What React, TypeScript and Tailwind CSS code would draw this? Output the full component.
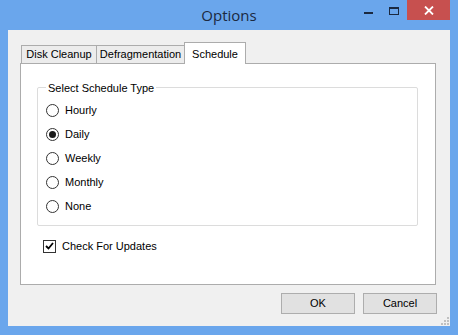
import React from 'react'

const ui = { fontFamily: '"Liberation Sans", Arial, sans-serif' }

function Radio({ label, checked }: { label: string; checked?: boolean }) {
  return (
    <div className="flex items-center h-[24px]">
      <span className="w-[13px] h-[13px] rounded-full border border-[#333] bg-white flex items-center justify-center">
        {checked && <span className="w-[7px] h-[7px] rounded-full bg-[#1a1a1a]" />}
      </span>
      <span className="ml-[6px] text-[11px] text-black">{label}</span>
    </div>
  )
}

export default function App() {
  const options = ['Hourly', 'Daily', 'Weekly', 'Monthly', 'None']
  return (
    <div className="w-[458px] h-[335px] bg-[#6aa6ec] flex flex-col" style={ui}>
      {/* Title bar */}
      <div className="h-[30px] flex items-start shrink-0 relative">
        <div className="flex-1 h-full flex items-center justify-center pl-[103px]">
          <span className="text-[15px] text-[#1b2940]" style={{ fontFamily: '"Open Sans", "Noto Sans", sans-serif' }}>
            Options
          </span>
        </div>
        <div className="flex items-start h-[21px] mr-[8px]">
          <div className="w-[26px] h-[21px] flex items-center justify-center">
            <span className="w-[9px] h-[2px] bg-[#1b2940] mt-[5px]" />
          </div>
          <div className="w-[26px] h-[21px] flex items-center justify-center">
            <span className="w-[10px] h-[8px] border border-[#1b2940] border-t-2" />
          </div>
          <div className="w-[43px] h-[20px] bg-[#c7504f] flex items-center justify-center">
            <svg width="10" height="9" viewBox="0 0 10 9">
              <path d="M1 0.5 L9 8.5 M9 0.5 L1 8.5" stroke="white" strokeWidth="1.8" />
            </svg>
          </div>
        </div>
      </div>

      {/* Client area */}
      <div className="mx-[8px] mb-[9px] flex-1 bg-[#f0f0f0] flex flex-col relative">
        <div className="pt-[12px] pl-[12px]">
          {/* Tabs */}
          <div className="flex items-end h-[21px] pl-[1px]">
            <div className="w-[76px] h-[18px] border border-b-0 border-[#acacac] bg-[#ececec] flex items-center justify-center text-[11px] text-black">
              Disk Cleanup
            </div>
            <div className="w-[89px] h-[18px] -ml-px border border-b-0 border-[#acacac] bg-[#ececec] flex items-center justify-center text-[11px] text-black">
              Defragmentation
            </div>
            <div className="w-[62px] h-[22px] -ml-px border border-b-0 border-[#acacac] bg-white flex items-start pt-[3px] justify-center text-[11px] text-black relative z-10 -mb-px">
              Schedule
            </div>
          </div>
          {/* Panel */}
          <div className="w-[416px] h-[222px] border border-[#acacac] bg-white pl-[16px] pt-[23px]">
            <div className="w-[381px] h-[139px] border border-[#dcdcdc] rounded-[2px] relative pt-[10px] pl-[8px]">
              <span className="absolute -top-[8px] left-[8px] bg-white px-[2px] text-[11px] text-black">
                Select Schedule Type
              </span>
              {options.map((o) => (
                <Radio key={o} label={o} checked={o === 'Daily'} />
              ))}
            </div>
            <div className="flex items-center mt-[12px] ml-[6px]">
              <span className="w-[13px] h-[13px] border border-[#333] bg-white flex items-center justify-center">
                <svg width="9" height="8" viewBox="0 0 9 8">
                  <path d="M1 4 L3.5 6.5 L8 1" stroke="black" strokeWidth="1.8" fill="none" />
                </svg>
              </span>
              <span className="ml-[6px] text-[11px] text-black">Check For Updates</span>
            </div>
          </div>
        </div>

        {/* Buttons */}
        <div className="flex justify-end gap-[8px] mt-[8px] mr-[13px]">
          <button className="w-[74px] h-[21px] border border-[#adadad] bg-[#e1e1e1] text-[11px] text-black">
            OK
          </button>
          <button className="w-[74px] h-[21px] border border-[#adadad] bg-[#e1e1e1] text-[11px] text-black">
            Cancel
          </button>
        </div>

        {/* Resize grip */}
        <svg className="absolute right-[1px] bottom-[1px]" width="10" height="10" viewBox="0 0 10 10">
          {[
            [8, 2],
            [5, 5],
            [8, 5],
            [2, 8],
            [5, 8],
            [8, 8],
          ].map(([x, y], i) => (
            <rect key={i} x={x} y={y} width="2" height="2" fill="#c0c0c0" />
          ))}
        </svg>
      </div>
    </div>
  )
}
